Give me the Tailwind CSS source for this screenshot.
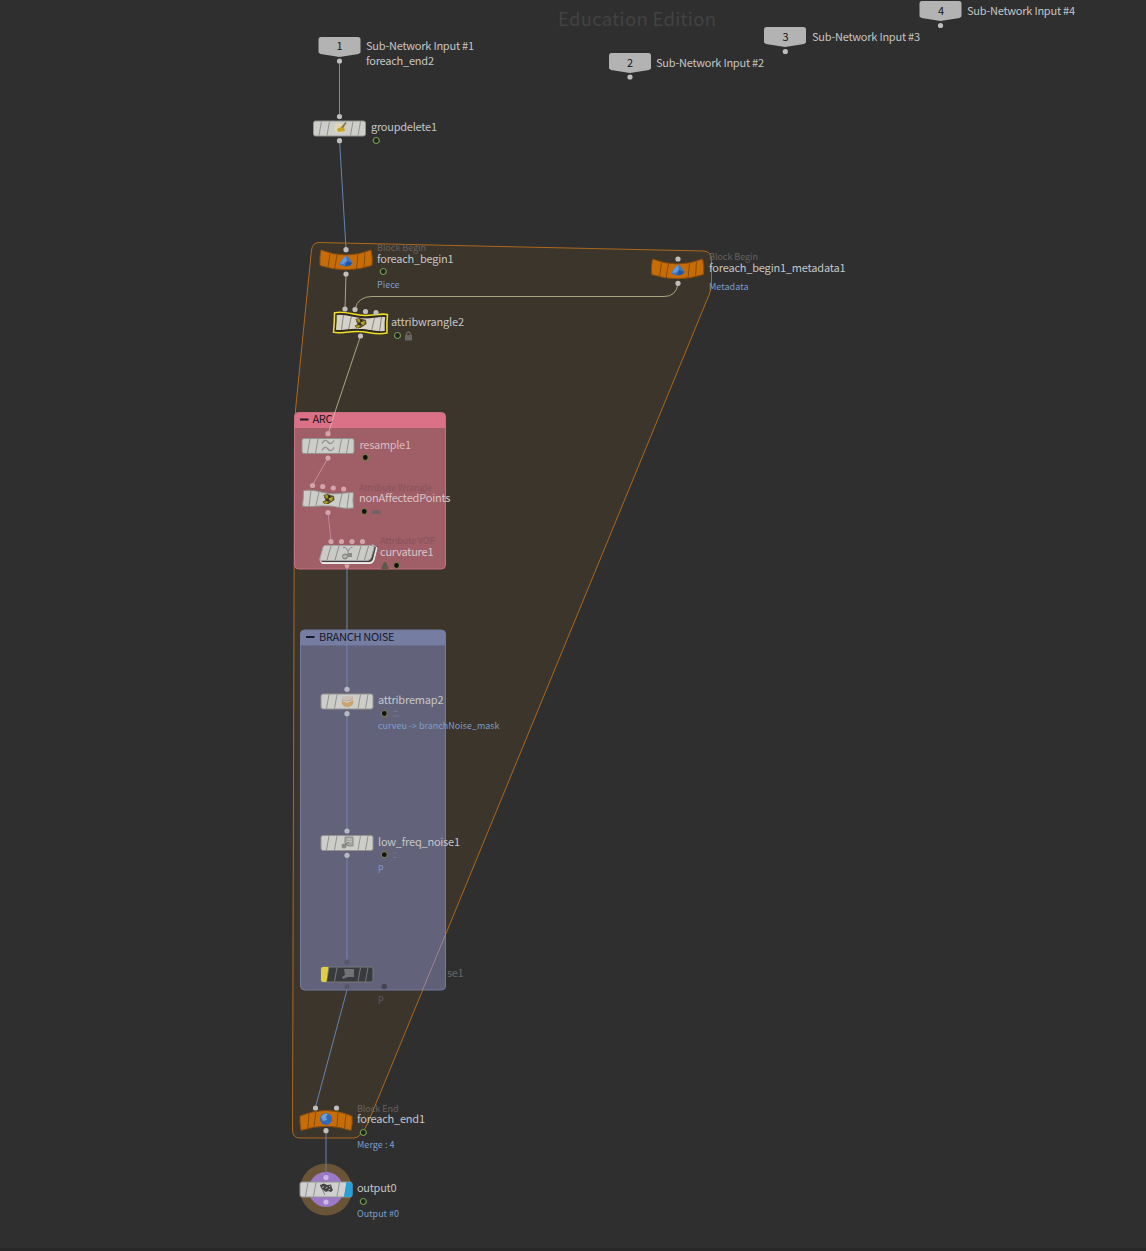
<!DOCTYPE html>
<html lang="en">
<head>
    <meta charset="UTF-8">
    <meta name="viewport" content="width=device-width, initial-scale=1.0">
    <title>Network Editor</title>
    <script src="https://cdn.jsdelivr.net/npm/@tailwindcss/browser@4"></script>
</head>
<body class="bg-[#2f2f2f] overflow-hidden">
<main class="w-[1146px] h-[1251px]">
<svg viewBox="0 0 1146 1251" class="block w-[1146px] h-[1251px] font-['Noto_Sans_CJK_SC','Open_Sans',sans-serif] text-[11px]">
    <defs>
        <!-- Node bodies, 52x15 -->
        <g id="plate">
            <rect x="0" y="0" width="52" height="15" rx="2" />
            <path d="M8 .5L5.500 14.500M16 .5L13.500 14.500M39.500 .5L37 14.500M47 .5L44.500 14.500" />
        </g>
        <g id="wave">
            <path d="M1.500 0C14 -1.500 20 3 31 3.300C40 3.300 46 1.500 51.500 2.200Q50.500 9 51.500 17.500C40 19 34 15.500 25 15.500C14 15 8 17 .5 15.500Q1.500 8 1.500 0Z" />
            <path d="M9 0L7 15.500M17 1.200L14 15M40 3.200L37 16.500M47 2.500L45 17.500" />
        </g>
        <g id="begin">
            <path d="M1 0Q26 10 51 0Q53 7 52 15.500Q26 24 0 15.500Q-.5 7 1 0Z" />
            <path d="M10 3.500L8 17.500M17 5L14.500 19M38 4.500L36.500 19M45 2.500L44 17.500" />
        </g>
        <g id="end">
            <path d="M0 6Q26 -5 52 6Q53 13 51 20.500Q26 12 1 20.500Q-.5 13 0 6Z" />
            <path d="M9 3.500L8 18M16 1.500L14 16.500M38 2L37 16.500M46 4L44.500 18.500" />
        </g>
        <path id="input" d="M2.500 0H39.500Q42 0 42 2.500V15.500L40 17L21 20L2 17L0 15.500V2.500Q0 0 2.500 0Z" />
        <circle id="dot" r="2.600" />
        <g id="flag"><circle r="3" /></g>
        <!-- Icons -->
        <g id="gem">
            <path class="fill-[#3a74c4]" d="M-6.500 2L-4 -1L0 -5.500L3 -3L6.500 2L4 4.500L-1 5.500L-6 4Z" />
            <path class="fill-[#5f9be2]" d="M-4 -1L0 -5.500L1 0L-3 3L-6 2.500Z" />
            <path class="fill-[#2853a0]" d="M1 0L6.500 2L4 4.500L-1 5.500Z" />
        </g>
        <g id="wrangle">
            <path class="fill-[#5c5320]" d="M-5 -4L-1 -5L2 -4L5.500 -3L6 1L3 3L0 5L-4 5L-6 3L-3 1L-4 -1Z" />
            <path class="fill-[#b3a22e]" d="M-4 -3.500L-1 -4L1 -2L-2 -1ZM1 -2L5 -1.500L3 2L0 1ZM-5 3L-1 2L-1 4L-3 5Z" />
            <path class="fill-[#302f20]" d="M-1 -4L2 -3L2 -1L0 -1ZM-3 1L0 0L1 2L-2 2Z" />
        </g>
        <g id="noise">
            <path class="fill-[#a5a5a3] stroke-[#888886]" d="M-2 -6H6V3H1L-2 0Z" />
            <path class="fill-none stroke-[#c4c4c0]" d="M0 -4H5M0 -1.500H5" />
            <circle class="fill-[#8b8b89]" cx="-3" cy="3" r="2.500" />
            <path class="fill-none stroke-[#777775]" d="M-2 2L2 -1" />
        </g>
    </defs>

    <rect class="fill-[#292829]" x="0" y="1248" width="1146" height="3" />
    <text class="fill-[#424242] text-[18.500px]" x="558" y="25.500" textLength="158">Education Edition</text>

    <!-- For-each region -->
    <path class="fill-[#3c352b] stroke-[#ad681d]" d="M319 242.500L704 251Q711 251.500 711.500 259V284Q711.500 289 709 295L370 1118Q362 1138 354 1138H300Q292.500 1138 292.500 1130L294.500 440L295.500 410L311.500 250Q312.500 242.500 319 242.500Z" />

    <!-- Network boxes -->
    <path class="fill-[#a05e67]" d="M294.500 428H445.500V565Q445.500 569 441.500 569H298.500Q294.500 569 294.500 565Z" />
    <path class="fill-[#db7186]" d="M294.500 428V416.500Q294.500 412.500 298.500 412.500H441.500Q445.500 412.500 445.500 416.500V428Z" />
    <rect class="fill-none stroke-[#c76f80]" x="294.500" y="412.500" width="151" height="156.500" rx="4" />
    <rect class="fill-[#62637a]" x="300.500" y="630" width="145" height="360" rx="4" />
    <path class="fill-[#5f6078]" d="M445 931V986Q445 990 441 990H422Z" />
    <path class="fill-[#757da3]" d="M300.500 645.500V634Q300.500 630 304.500 630H441.500Q445.500 630 445.500 634V645.500Z" />
    <rect class="fill-none stroke-[#737b9c]" x="300.500" y="630" width="145" height="360" rx="4" />
    <path class="stroke-[#a18589] fill-none" d="M445.500 934.500L422.500 990" />
    <path class="stroke-[#251b20] stroke-2 fill-none" d="M300 419.500H308.500" />
    <path class="stroke-[#171b2b] stroke-2 fill-none" d="M306 637H314.500" />

    <!-- Wires -->
    <g class="fill-none stroke-[#6683b0]">
        <path class="stroke-[#7687b8]" d="M339.500 61V116" />
        <path d="M339.500 140L346 249M347 990L315.500 1107M326 1131V1164" />
        <path class="stroke-[#7286b8]" d="M347 566V688M347 713V830M347 855V962" />
    </g>
    <g class="fill-none stroke-[#aaa480]">
        <path d="M346 274L345 309M678 284Q676 296.500 664 296.500H372Q358 296.500 355 309M360.500 336L335 412" />
        <path class="stroke-[#e0aca4]" d="M335 412L328.500 433" />
        <path class="stroke-[#c98f97]" d="M328 458L312.500 485" />
        <path class="stroke-[#bd86a2]" d="M328 512L331 541" />
    </g>
    <text class="fill-[#25151b]" x="312.500" y="423.300" textLength="20">ARC</text>
    <text class="fill-[#161a29]" x="319" y="640.500" textLength="75.500">BRANCH NOISE</text>

    <!-- Sub-network inputs -->
    <g class="fill-[#b3b3b3]">
        <use href="#input" x="318.500" y="37" /><use href="#input" x="609" y="53" />
        <use href="#input" x="764" y="27" /><use href="#input" x="919.500" y="1" />
    </g>
    <g class="fill-[#151515]" text-anchor="middle">
        <text x="339.500" y="50.300">1</text><text x="630" y="67.300">2</text>
        <text x="785.500" y="41.300">3</text><text x="941" y="15.300">4</text>
    </g>

    <!-- Nodes -->
    <g class="fill-[#cdcdca] stroke-[#929290]">
        <use href="#plate" x="313.500" y="121" />
        <use href="#plate" x="321" y="694" />
        <use href="#plate" x="321" y="835.500" />
        <use href="#plate" x="302" y="438.500" />
        <use href="#wave" x="302" y="490.500" />
    </g>
    <g class="fill-[#c66d08] stroke-[#8b4b0b]">
        <use href="#begin" x="320" y="250" />
        <use href="#begin" x="651.500" y="259" />
        <use href="#end" x="300" y="1110" />
    </g>
    <use href="#gem" x="346" y="261" />
    <use href="#gem" x="678" y="270" />
    <circle class="fill-[#3468b4]" cx="326" cy="1119" r="6" />
    <path class="fill-[#69a0dc]" d="M321 1117Q324 1112 328 1114L326 1117L327 1120L323 1121Z" />

    <!-- groupdelete icon -->
    <circle class="fill-[#e3d6b8]" cx="339" cy="128" r="5" />
    <path class="fill-[#c5a51f]" d="M345 124L344 128L345 131L338 132L337 129L341 127Z" />
    <path class="stroke-[#79763b] stroke-[1.500] fill-none" d="M346 122.500L342 127.500" />

    <!-- selected attribwrangle -->
    <g class="fill-[#d5d2c9] stroke-[#89867e]"><use href="#wave" x="334.500" y="314.500" /></g>
    <path class="fill-none stroke-[#302b1e] stroke-[3.500]" stroke-linejoin="round" d="M335 313.500C347 311.500 354 316.500 365 316.500C374 316.500 380 314 387 315.500Q386 323 386.500 332.500C375 334.500 369 330.500 359 330.500C348 330 341 333 334 331.500Q335 322 335 313.500Z" />
    <path class="fill-none stroke-[#f0df28] stroke-[1.600]" stroke-linejoin="round" d="M334.500 312.800C346 310.500 354 315.500 365 315.500C374 315.500 381 313 387.500 314.500Q386.500 323 387 333C375 335.500 369 331.500 359 331.500C348 331 341 334 333.500 332.300Q334.500 322 334.500 312.800Z" />
    <use href="#wrangle" x="360.500" y="323" />
    <use href="#wrangle" x="328.500" y="499" />

    <!-- resample icon -->
    <path class="fill-none stroke-[#929292] stroke-[1.300]" d="M322 443.500Q325 438 328 442T334 440.500M322 450.500Q325 445 328 449T334 447.500" />

    <!-- curvature1 -->
    <path class="fill-[#dfdddb] stroke-[#eeecec]" d="M320 560L322 563.500H370Q373 563.500 374 560L377 548L373 545Z" />
    <path class="fill-[#464145]" d="M320 559.500L322 562H369Q372 562 373 559L376 547L372 545Z" />
    <path class="fill-[#cacac7] stroke-[#a3a1a1]" d="M325 545.500H372Q375 545.500 374 548L371 558Q370 560.500 367 560.500H321Q319 560.500 320 558L323 547.500Q323.500 545.500 325 545.500Z" />
    <path class="stroke-[#8c8b8a] fill-none" d="M331 546L327 560M339 546L335 560M361 546L357 560M368.500 546L364.500 560" />
    <path class="fill-none stroke-[#888]" d="M343 547.500H345.500L348 551L351 547.500H352.500M348 551V555H345" />
    <circle class="fill-[#b3b3b2] stroke-[#777]" cx="345" cy="556.500" r="2.500" />
    <rect class="fill-[#8a8a88]" x="348" y="553" width="4" height="4" />

    <!-- attribremap / noise icons -->
    <path class="fill-[#c9c1b6]" d="M342 696H353V701H342Z" />
    <path class="fill-[#cda26c]" d="M341.500 701L347 703L353.500 700Q354 707 347.500 707Q342 707 341.500 701Z" />
    <path class="stroke-[#b5a99b] fill-none" d="M342 699.500Q347 703 353 698" />
    <use href="#noise" x="347" y="843" />

    <!-- bypassed node -->
    <g class="fill-[#383a3d] stroke-[#777979]"><use href="#plate" x="321" y="967" /></g>
    <path class="fill-[#e0ce43]" d="M323 967H328.500L326.500 982H323Q321 982 321 980V969Q321 967 323 967Z" />
    <path class="fill-[#707274]" d="M344 969H354V977H348L343 979L342 977L345 975Z" />

    <!-- output0 with display and render flags -->
    <circle class="fill-[#695438]" cx="326" cy="1189.500" r="26" />
    <circle class="fill-[#9b79c7]" cx="326" cy="1189.500" r="17.500" />
    <path class="stroke-[#7d7a76] fill-none" d="M326 1164V1172" />
    <path class="stroke-[#737fb7] fill-none" d="M326 1172V1177" />
    <g class="fill-[#d0d0d0] stroke-[#939393]"><use href="#plate" x="300" y="1182" /></g>
    <path class="fill-[#279fd8]" d="M346.500 1182H350Q352.500 1182 352.500 1184.500V1194.500Q352.500 1197 350 1197H344Z" />
    <path class="fill-[#444]" d="M320 1185L324 1183.500L327 1185L331 1184.500L332 1188L333 1190L331 1192L328 1191L326 1192L323 1190L321 1188Z" />
    <path class="fill-none stroke-[#b5b5b5]" d="M322 1187.500L324 1186.500M325.500 1188.500L327.500 1187M329 1186.500L330.500 1186M328.500 1190L330.500 1189" />
    <path class="fill-none stroke-[#888]" d="M322 1189L325 1195" />

    <!-- Connectors -->
    <g class="fill-[#c0bebb]">
        <use href="#dot" x="339.500" y="61" /><use href="#dot" x="630" y="77" />
        <use href="#dot" x="785.300" y="51.500" /><use href="#dot" x="940.500" y="25.500" />
        <use href="#dot" x="339.500" y="116.500" /><use href="#dot" x="339.500" y="140.700" />
        <use href="#dot" x="346" y="249.700" /><use href="#dot" x="346" y="274" />
        <use href="#dot" x="678" y="259" /><use href="#dot" x="678" y="283.300" />
        <use href="#dot" x="345" y="309" /><use href="#dot" x="355" y="309.500" />
        <use href="#dot" x="365.500" y="311.500" /><use href="#dot" x="376" y="312.500" />
        <use href="#dot" x="360.500" y="336" />
        <use href="#dot" x="315.500" y="1108" /><use href="#dot" x="336.500" y="1108" />
        <use href="#dot" x="326" y="1130.700" />
    </g>
    <g class="fill-[#d1a5ab]">
        <use href="#dot" x="328" y="433.700" /><use href="#dot" x="328" y="458" />
        <use href="#dot" x="312.500" y="485.500" /><use href="#dot" x="322.700" y="486.500" />
        <use href="#dot" x="333.300" y="488" /><use href="#dot" x="343.700" y="489" />
        <use href="#dot" x="328" y="512.500" />
        <use href="#dot" x="331" y="541.500" /><use href="#dot" x="341.500" y="541.500" />
        <use href="#dot" x="352" y="541.500" /><use href="#dot" x="362.500" y="541.500" />
        <path d="M344.500 564.500H349.500Q349 568.500 347 568.500T344.500 564.500Z" />
    </g>
    <g class="fill-[#b9b9c3]">
        <use href="#dot" x="347" y="689.300" /><use href="#dot" x="347" y="713.700" />
        <use href="#dot" x="347" y="831" /><use href="#dot" x="347" y="855.300" />
    </g>
    <g class="fill-[#565768]">
        <use href="#dot" x="347" y="962" /><use href="#dot" x="347" y="986.500" />
    </g>
    <g class="fill-[#ccb7e5]">
        <use href="#dot" x="326" y="1177.500" /><use href="#dot" x="326" y="1202" />
    </g>

    <!-- Status flags -->
    <g class="fill-[#20251b] stroke-[#6f994e] stroke-[1.200]">
        <use href="#flag" x="376.300" y="140.500" /><use href="#flag" x="383.300" y="271.500" />
        <use href="#flag" x="397.500" y="335.500" /><use href="#flag" x="363.300" y="1132.500" />
        <use href="#flag" x="363.300" y="1201.500" />
    </g>
    <g class="fill-[#14120f] stroke-[#7d7c4e] stroke-[1.200]">
        <use href="#flag" x="365.300" y="457.500" /><use href="#flag" x="364.300" y="511.500" />
        <use href="#flag" x="396.500" y="565.500" /><use href="#flag" x="384.300" y="713.500" />
        <use href="#flag" x="384.300" y="854.700" />
    </g>
    <circle class="fill-[#454554]" cx="384.300" cy="986.500" r="2.800" />
    <path class="fill-[#69655f]" d="M405 335H412V340.500H405Z" />
    <path class="fill-none stroke-[#69655f] stroke-[1.300]" d="M406.500 335V333.500Q408.500 330.500 410.500 333.500V335" />
    <path class="fill-[#7a6067]" d="M372 514V511.500L374 510H379L381 511.500V514Z" />
    <path class="fill-[#5a5a49]" d="M381 569L384 562H386L389 569Z" />
    <path class="fill-none stroke-[#747584]" d="M393 711.500H398M392.500 716H399M393 853H397M393 857.500H397" />

    <!-- Type labels -->
    <g class="fill-[#636160] text-[9px]">
        <text x="377" y="251.300" textLength="49">Block Begin</text>
        <text x="709" y="260.300" textLength="49">Block Begin</text>
        <text x="357" y="1112" textLength="41.500">Block End</text>
        <text class="fill-[#87535b]" x="359" y="491.300" textLength="73">Attribute Wrangle</text>
        <text class="fill-[#87535b]" x="380" y="544.300" textLength="55">Attribute VOP</text>
    </g>

    <!-- Node names -->
    <g class="fill-[#c5c5c5]">
        <text x="366" y="50.300" textLength="108">Sub-Network Input #1</text>
        <text x="366" y="65.300" textLength="68">foreach_end2</text>
        <text x="656" y="67.300" textLength="108">Sub-Network Input #2</text>
        <text x="812" y="41.300" textLength="108">Sub-Network Input #3</text>
        <text x="967" y="15.300" textLength="108">Sub-Network Input #4</text>
        <text x="371" y="131.300" textLength="66">groupdelete1</text>
        <text x="377" y="263.300" textLength="76.500">foreach_begin1</text>
        <text x="709" y="272.300" textLength="136.500">foreach_begin1_metadata1</text>
        <text x="391" y="326.300" textLength="73">attribwrangle2</text>
        <text class="fill-[#dbb9be]" x="359.500" y="449.300" textLength="51.500">resample1</text>
        <text class="fill-[#dbc4c7]" x="359" y="502.300" textLength="91.500">nonAffectedPoints</text>
        <text class="fill-[#dbc4c7]" x="380" y="556.300" textLength="53.500">curvature1</text>
        <text x="378" y="704.300" textLength="65.500">attribremap2</text>
        <text x="378" y="846.300" textLength="82">low_freq_noise1</text>
        <text class="fill-[#666]" x="447" y="977.300" textLength="16.500">se1</text>
        <text x="357" y="1123.300" textLength="68">foreach_end1</text>
        <text x="357" y="1192.300" textLength="39.500">output0</text>
    </g>

    <!-- Descriptions -->
    <g class="fill-[#7a9ecb] text-[9px]">
        <text x="377" y="288" textLength="22.500">Piece</text>
        <text x="709" y="290" textLength="39.500">Metadata</text>
        <text x="378" y="729" textLength="121.500">curveu -&gt; branchNoise_mask</text>
        <text class="fill-[#8395c8]" x="378" y="869.500">p</text>
        <text class="fill-[#5d5b60]" x="378" y="1000.500">p</text>
        <text x="357" y="1148" textLength="37.500">Merge : 4</text>
        <text x="357" y="1217" textLength="42">Output #0</text>
    </g>
</svg>
</main>
</body>
</html>
